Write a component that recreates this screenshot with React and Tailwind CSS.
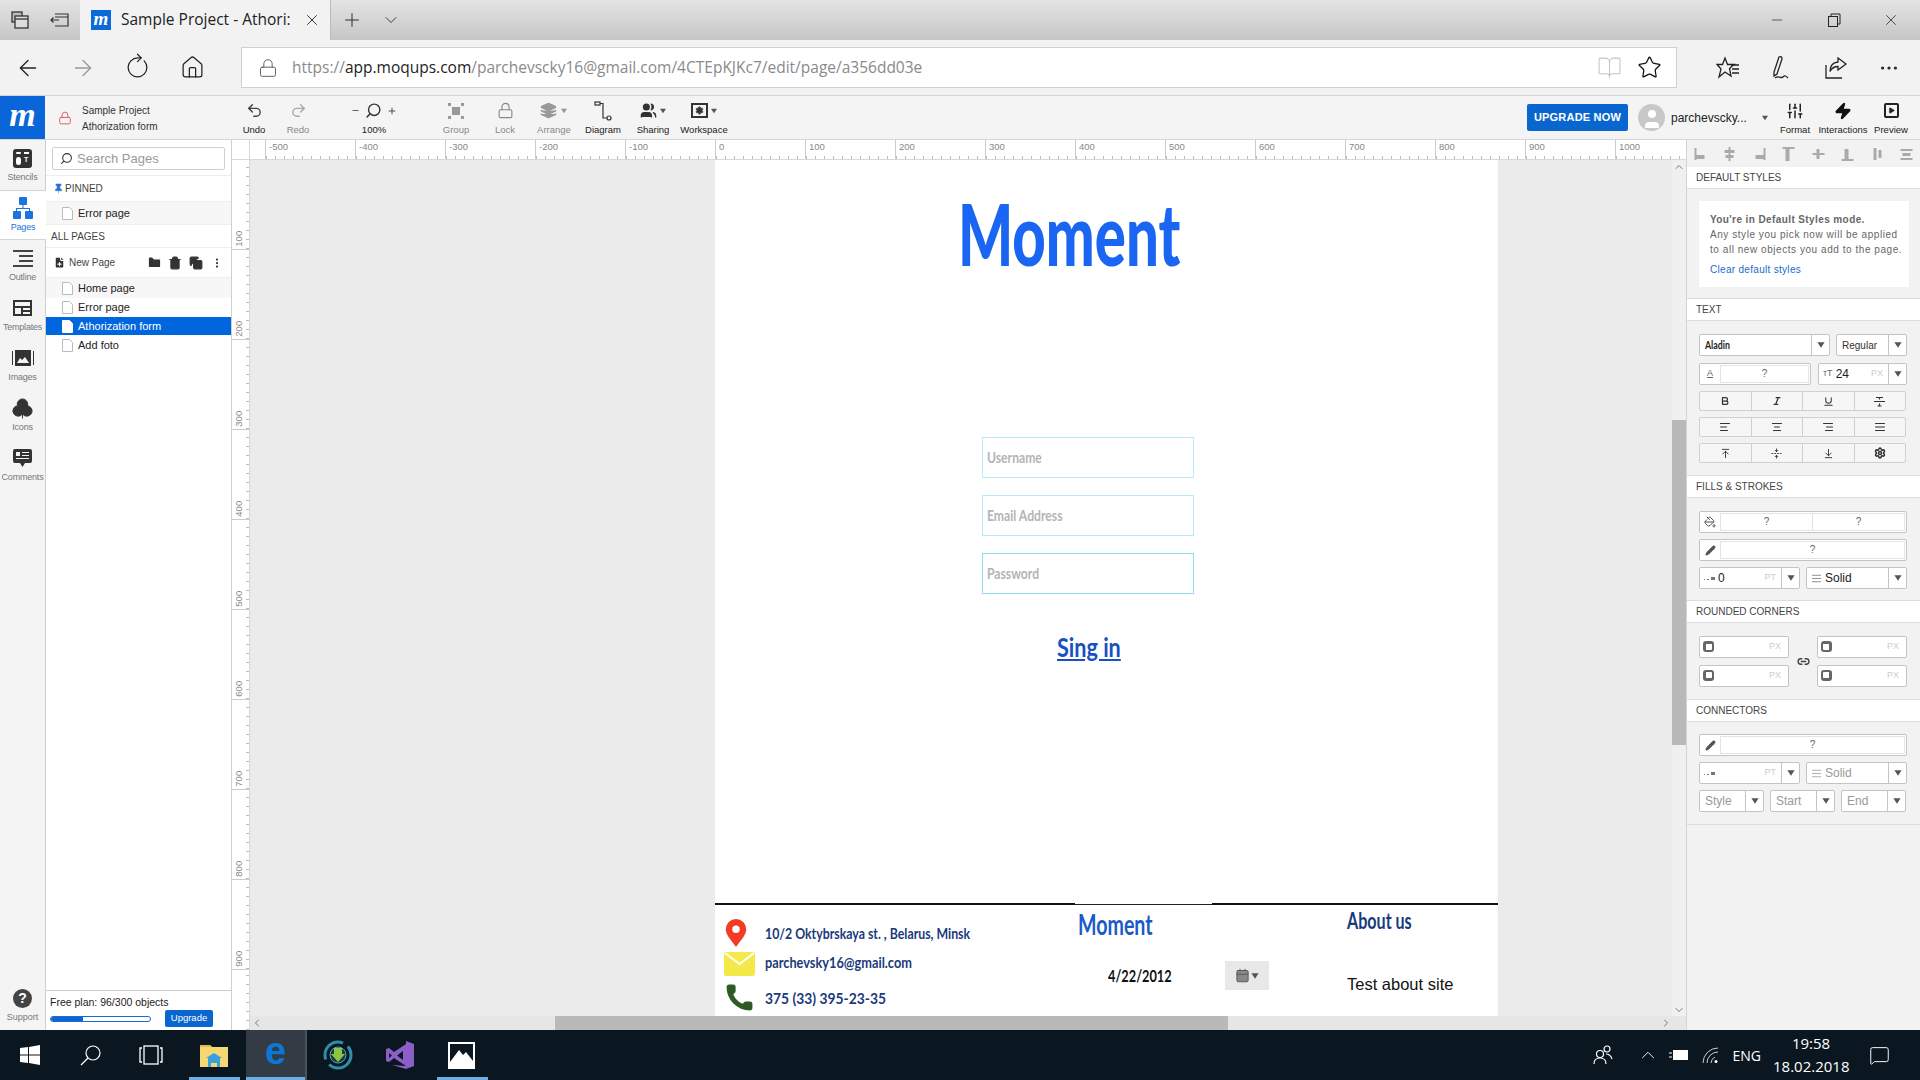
import React from 'react'
import { Lock, Home, ArrowLeft, ArrowRight, RotateCw, Plus, ChevronDown, ChevronUp, ChevronLeft, ChevronRight, X, Minus, Search, Star, Bold, Italic, Underline, AlignLeft, AlignCenter, AlignRight, AlignJustify, ArrowUpToLine, FoldVertical, ArrowDownToLine, Settings, Undo2, Redo2, Zap, Play, MoreHorizontal, MoreVertical, Link2, Pencil, Users, BookOpen, Phone, Calendar, Trash2, Copy, FolderPlus, FilePlus, Pin, Club, MessageSquare, Layers, SlidersVertical, User, PaintBucket } from 'lucide-react'

const sans = "font-['Liberation_Sans',Arial,sans-serif]"

// no Aladin here, squeezed heavy Lato is the closest
const Aladin = ({ className = '', children }) => (
  <span className={`inline-block whitespace-nowrap font-['Lato',sans-serif] origin-left ${className}`}>{children}</span>
)

const Caret = ({ className = '' }) => <span className={`inline-block w-0 h-0 border-x-[4px] border-x-transparent border-t-[6px] border-t-[#555] ${className}`}></span>

const TabBar = () => (
  <div className="h-[40px] flex items-stretch bg-linear-to-b from-[#e4e4e4] to-[#c6c6c6] text-[#222]">
    <div className="w-[40px] flex items-center justify-center">
      <svg width="20" height="20" viewBox="0 0 20 20" fill="none" stroke="#333" strokeWidth="1.3"><rect x="2" y="2" width="10" height="10" fill="#bbb" /><rect x="5" y="6" width="13" height="12" fill="#ddd" /><path d="M5 9h13" /></svg>
    </div>
    <div className="w-[40px] flex items-center justify-center">
      <svg width="20" height="18" viewBox="0 0 20 18" fill="none" stroke="#333" strokeWidth="1.2"><path d="M5 3h13v12H5M5 6h13M1 9h8M3.5 6.5 1 9l2.500 2.500" /></svg>
    </div>
    <div className="w-[251px] bg-[#f2f2f2] flex items-center border-r border-[#bbb]">
      <div className="ml-[11px] w-[20px] h-[20px] bg-[#0b6ad8] flex items-center justify-center text-white font-['Liberation_Serif',serif] italic font-bold text-[19px] leading-none pb-1">m</div>
      <span className="ml-[10px] w-[170px] overflow-hidden whitespace-nowrap text-[15.5px] font-['Open_Sans',sans-serif]">Sample Project - Athori:</span>
      <X size={18} strokeWidth={1.2} className="ml-[12px]" />
    </div>
    <div className="w-[42px] flex items-center justify-center"><Plus size={22} strokeWidth={1} /></div>
    <div className="w-[36px] flex items-center justify-center"><ChevronDown size={20} strokeWidth={1} /></div>
    <div className="flex-1"></div>
    <div className="w-[58px] flex items-center justify-center"><Minus size={16} strokeWidth={1} /></div>
    <div className="w-[56px] flex items-center justify-center">
      <svg width="14" height="14" viewBox="0 0 14 14" fill="none" stroke="#222"><rect x="1.500" y="3.500" width="9" height="10" /><path d="M4 3V1h9v10h-2.500" /></svg>
    </div>
    <div className="w-[58px] flex items-center justify-center"><X size={18} strokeWidth={1} /></div>
  </div>
)

const NavBar = () => (
  <div className="h-[56px] bg-[#f2f2f2] flex items-center border-b border-[#d4d4d4] text-[#222]">
    <div className="w-[55px] flex justify-center"><ArrowLeft size={26} strokeWidth={1.2} /></div>
    <div className="w-[55px] flex justify-center text-[#999]"><ArrowRight size={26} strokeWidth={1.2} /></div>
    <div className="w-[55px] flex justify-center"><RotateCw size={25} strokeWidth={1.2} className="-rotate-45" /></div>
    <div className="w-[55px] flex justify-center"><Home size={25} strokeWidth={1.2} /></div>
    <div className="ml-[21px] w-[1436px] h-[41px] bg-white border border-[#d0d0d0] flex items-center font-['Open_Sans',sans-serif] text-[15.5px] text-[#8a8a8a]">
      <Lock size={20} strokeWidth={1.1} className="ml-[16px] text-[#555]" />
      <span className="ml-[14px]">https://<span className="text-[#222]">app.moqups.com</span>/parchevscky16@gmail.com/4CTEpKJKc7/edit/page/a356dd03e</span>
      <div className="ml-auto mr-[14px] flex items-center gap-[15px]">
        <BookOpen size={25} strokeWidth={1} className="text-[#c4c4c4]" />
        <Star size={25} strokeWidth={1.2} className="text-[#111]" />
      </div>
    </div>
    <div className="flex items-center pl-[39px] gap-[30px]">
      <svg width="24" height="24" viewBox="0 0 24 24" fill="none" stroke="#222" strokeWidth="1.3"><path d="M9 2l2.500 6.500H18l-4.500 4L15 20l-6-4-6 5 2-8-4-4.500h5.500zM15 9h8M16 13h7M16 17h7" /></svg>
      <svg width="24" height="26" viewBox="0 0 24 26" fill="none" stroke="#222" strokeWidth="1.3"><path d="M9 2c2-1 3 0 3 2L7 19l-3 2 0-4zM5 23c4-3 6 1 8-1s3-1 5 1" /></svg>
      <svg width="24" height="24" viewBox="0 0 24 24" fill="none" stroke="#222" strokeWidth="1.3"><path d="M2 9v13h16M14 2l8 6-8 6v-3.500c-4 0-6 1-8 5 0-6 3-9 8-9.500z" /></svg>
      <MoreHorizontal size={22} strokeWidth={1.5} />
    </div>
  </div>
)

const ToolItem = ({ label, dim, w, icon }) => (
  <div className={`flex flex-col items-center shrink-0 ${dim ? 'text-[#888]' : 'text-[#222]'}`} style={{ width: w }}>
    <div className="h-[24px] flex items-center justify-center">{icon}</div>
    <span className="text-[9.5px] leading-[14px] whitespace-nowrap">{label}</span>
  </div>
)

const Toolbar = () => (
  <div className={`h-[44px] flex items-center bg-[#f4f4f4] border-b border-[#d4d4d4] ${sans}`}>
    <div className="w-[45px] h-full bg-[#0a66d8] flex items-center justify-center text-white font-['Liberation_Serif',serif] italic font-bold text-[34px] leading-none pb-[6px]">m</div>
    <Lock size={14} strokeWidth={1.5} className="ml-[13px] text-[#d9534f]" />
    <div className="ml-[10px] w-[156px] pt-[2px] text-[10px] leading-[16px] text-[#333] whitespace-nowrap">
      <div>Sample Project</div>
      <div>Athorization form</div>
    </div>
    <ToolItem w={32} label="Undo" icon={<Undo2 size={17} strokeWidth={2} className="text-[#444]" />} />
    <ToolItem w={56} dim label="Redo" icon={<Redo2 size={17} strokeWidth={2} className="text-[#aaa]" />} />
    <ToolItem w={96} label="100%" icon={<span className="flex items-center gap-[5px] text-[15px] text-[#333]"><Minus size={9} strokeWidth={2} /><Search size={17} strokeWidth={2} className="-scale-x-100" /><Plus size={10} strokeWidth={2} /></span>} />
    <ToolItem w={68} dim label="Group" icon={<svg width="16" height="16" viewBox="0 0 16 16" fill="#999"><rect x="4" y="4" width="8" height="8" /><path d="M0 0h3v3H0zM13 0h3v3h-3zM0 13h3v3H0zM13 13h3v3h-3z" /></svg>} />
    <ToolItem w={30} dim label="Lock" icon={<Lock size={17} strokeWidth={1.6} className="text-[#888]" />} />
    <ToolItem w={68} dim label="Arrange" icon={<span className="flex items-center gap-[3px]"><Layers size={17} fill="#999" className="text-[#999]" /><Caret className="scale-75 opacity-60" /></span>} />
    <ToolItem w={30} label="Diagram" icon={<svg width="18" height="20" viewBox="0 0 18 20" fill="none" stroke="#333" strokeWidth="1.2"><rect x="1" y="1" width="5" height="3" /><circle cx="15" cy="17" r="2" /><path d="M6 2.500h3v14.500h4" /></svg>} />
    <ToolItem w={70} label="Sharing" icon={<span className="flex items-center gap-[2px]"><Users size={17} fill="#333" className="text-[#333]" /><Caret className="scale-75" /></span>} />
    <ToolItem w={32} label="Workspace" icon={<span className="flex items-center gap-[2px]"><span className="relative w-[17px] h-[15px] border-2 border-[#333] flex items-center justify-center"><Settings size={9} fill="#333" className="text-[#333]" /></span><Caret className="scale-75" /></span>} />
    <div className="ml-auto pr-[5px] flex items-center">
      <div className="w-[101px] h-[27px] bg-[#0a66cf] rounded-[2px] text-white text-[11px] font-bold tracking-[.2px] flex items-center justify-center">UPGRADE NOW</div>
      <div className="ml-[10px] w-[27px] h-[27px] rounded-full bg-[#c8c8c8] flex items-end justify-center overflow-hidden"><User size={24} fill="#fff" strokeWidth={0} /></div>
      <span className="ml-[6px] w-[80px] text-[12px] text-[#222] whitespace-nowrap">parchevscky...</span>
      <Caret className="ml-[10px] scale-75" />
      <div className="ml-[2px] flex">
        <ToolItem w={48} label="Format" icon={<SlidersVertical size={18} strokeWidth={2} className="text-[#222]" />} />
        <ToolItem w={48} label="Interactions" icon={<Zap size={18} fill="#111" className="text-[#111]" />} />
        <ToolItem w={48} label="Preview" icon={<span className="w-[15px] h-[15px] border-2 border-[#222] rounded-[2px] flex items-center justify-center"><Play size={7} fill="#222" className="text-[#222]" /></span>} />
      </div>
    </div>
  </div>
)

const railItems = [
  { label: 'Stencils', icon: <span className="w-[19px] h-[19px] rounded-[3px] bg-[#333] grid grid-cols-2 p-[3px] gap-[3px]"><i className="bg-white rounded-full"></i><i className="bg-white"></i><i className="bg-white rounded-full"></i><b className="text-white text-[7px] leading-[6px] not-italic">T</b></span> },
  { label: 'Pages', active: true, icon: <svg width="20" height="22" viewBox="0 0 20 22" fill="#1a73e0"><rect x="6" y="0" width="8" height="8" rx="1" /><path d="M9.500 8h1v3H17v3h-1v-2H4v2H3v-3h6.500z" /><rect x="0" y="14" width="8" height="8" rx="1" /><rect x="12" y="14" width="8" height="8" rx="1" /></svg> },
  { label: 'Outline', icon: <svg width="20" height="17" viewBox="0 0 20 17" fill="#444"><path d="M0 0h20v2H0zM6 5h14v2H6zM6 10h14v2H6zM0 15h20v2H0z" /></svg> },
  { label: 'Templates', icon: <svg width="19" height="16" viewBox="0 0 19 16" fill="#333"><path d="M0 0h19v16H0zM2 2v4h15V2zM2 8v6h6V8zm8 0v2h7V8zm0 4v2h7v-2z" fillRule="evenodd" /></svg> },
  { label: 'Images', icon: <svg width="22" height="16" viewBox="0 0 22 16" fill="#333"><path d="M0 1h1v14H0zM21 1h1v14h-1zM3 0h16v16H3zm2 13h12l-4-6-3 3-2-2z" fillRule="evenodd" /></svg> },
  { label: 'Icons', icon: <Club size={23} fill="#333" strokeWidth={1} className="text-[#333]" /> },
  { label: 'Comments', icon: <svg width="19" height="18" viewBox="0 0 19 18" fill="#333"><path d="M2 0h15a2 2 0 0 1 2 2v10a2 2 0 0 1-2 2h-5l-2.500 4L7 14H2a2 2 0 0 1-2-2V2a2 2 0 0 1 2-2zm1 3v4h4V3zm6 0v1h7V3zm0 3v1h7V6zM3 9v1h13V9z" fillRule="evenodd" /></svg> },
]

const LeftRail = () => (
  <div className={`w-[46px] shrink-0 bg-[#f4f4f4] border-r border-[#cfcfcf] flex flex-col ${sans}`}>
    {railItems.map((it, i) => (
      <div key={i} className={`h-[50px] flex flex-col items-center justify-center gap-[2px] pb-[2px] ${it.active ? 'bg-white border-y border-[#d4d4d4] -mr-px text-[#1a73e0]' : 'text-[#777]'}`}>
        <div className="h-[24px] flex items-center justify-center">{it.icon}</div>
        <span className="text-[9px] leading-[10px] tracking-[-.2px]">{it.label}</span>
      </div>
    ))}
    <div className="mt-auto h-[41px] flex flex-col items-center text-[#777]">
      <span className="w-[19px] h-[19px] rounded-full bg-[#444] text-white text-[14px] font-bold leading-[19px] text-center">?</span>
      <span className="text-[9px] mt-[4px] leading-[10px]">Support</span>
    </div>
  </div>
)

const Doc = ({ active }) => (
  <svg width="11" height="13" viewBox="0 0 11 13" fill="#fff" stroke={active ? '#fff' : '#bbb'} className="ml-[16px] mr-[5px] shrink-0"><path d="M.5.5h7l3 3v9H.5z" /></svg>
)

const PageRow = ({ label, bg, active }) => (
  <div className={`flex items-center text-[11px] ${bg} ${active ? 'bg-[#0066dd] text-white' : 'text-[#222]'}`}>
    <Doc active={active} />
    <span>{label}</span>
  </div>
)

const SidePanel = () => (
  <div className={`w-[186px] shrink-0 bg-white border-r border-[#cfcfcf] flex flex-col ${sans}`}>
    <div className="h-[36px] shrink-0 pt-[7px] px-[6px] border-b border-[#eee]">
      <div className="h-[23px] border border-[#d0d0d0] rounded-[2px] flex items-center text-[#999] text-[13px]">
        <Search size={13} strokeWidth={2} className="ml-[7px] mr-[4px] text-[#333] -scale-x-100" />Search Pages
      </div>
    </div>
    <div className="h-[26px] shrink-0 flex items-center pl-[7px] text-[10px] text-[#444] border-b border-[#eee]">
      <Pin size={11} fill="#2a6fd6" strokeWidth={1} className="text-[#2a6fd6] mr-[1px]" />PINNED
    </div>
    <PageRow label="Error page" bg="h-[22px] shrink-0 bg-[#f7f7f7]" />
    <div className="h-[24px] shrink-0 flex items-center pl-[5px] text-[10px] text-[#444] border-y border-[#eee]">ALL PAGES</div>
    <div className="h-[30px] shrink-0 flex items-center pl-[7px] pr-[8px] text-[10px] text-[#444] border-b border-[#eee]">
      <FilePlus size={13} fill="#333" className="text-white mr-[3px]" />New Page
      <FolderPlus size={15} fill="#333" className="text-white ml-auto" />
      <Trash2 size={14} fill="#333" className="text-[#333] ml-[6px]" />
      <Copy size={14} fill="#333" className="text-[#333] ml-[7px]" />
      <MoreVertical size={12} strokeWidth={2.5} className="text-[#333] ml-[8px]" />
    </div>
    <PageRow label="Home page" bg="h-[20px] shrink-0 bg-[#f7f7f7]" />
    <PageRow label="Error page" bg="h-[19px] shrink-0" />
    <PageRow label="Athorization form" bg="h-[18px] shrink-0" active />
    <PageRow label="Add foto" bg="h-[20px] shrink-0" />
    <div className="mt-auto h-[40px] border-t border-[#ccc] px-[4px] pt-[5px]">
      <div className="text-[10.5px] leading-[13px] text-[#222] whitespace-nowrap">Free plan: 96/300 objects</div>
      <div className="flex items-center mt-[1px]">
        <div className="w-[101px] h-[6px] border border-[#1a6ad0] rounded-full overflow-hidden"><div className="h-full bg-[#0a66d8]" style={{ width: '32%' }}></div></div>
        <div className="ml-[14px] w-[48px] h-[17px] bg-[#0a66cf] rounded-[2px] text-white text-[9.5px] flex items-center justify-center">Upgrade</div>
      </div>
    </div>
  </div>
)

const hLabels = [-500, -400, -300, -200, -100, 0, 100, 200, 300, 400, 500, 600, 700, 800, 900, 1000]
const vLabels = [100, 200, 300, 400, 500, 600, 700, 800, 900]

const HRuler = () => (
  <div className={`h-[20px] shrink-0 flex overflow-hidden bg-white border-b border-[#d8d8d8] ${sans}`}>
    <div className="w-[18px] shrink-0 border-r border-[#d8d8d8]"></div>
    <div className="w-[15px] shrink-0"></div>
    {hLabels.map(n => (
      <div key={n} className="w-[90px] shrink-0 border-l border-[#ccc] pl-[3px] text-[9.5px] leading-[13px] text-[#888] bg-[repeating-linear-gradient(90deg,#bbb_0,#bbb_1px,transparent_1px,transparent_9px)] bg-[length:100%_3px] bg-bottom bg-no-repeat">{n}</div>
    ))}
  </div>
)

const VRuler = () => (
  <div className={`w-[18px] shrink-0 flex flex-col bg-white border-r border-[#d8d8d8] overflow-hidden ${sans}`}>
    {vLabels.map(n => (
      <div key={n} className="h-[90px] shrink-0 border-b border-[#ccc] relative bg-[repeating-linear-gradient(0deg,#bbb_0,#bbb_1px,transparent_1px,transparent_9px)] bg-[length:3px_100%] bg-right bg-no-repeat">
        <span className="absolute left-[-1px] bottom-[6px] -rotate-90 text-[9.5px] text-[#888] leading-none">{n}</span>
      </div>
    ))}
    <div className="flex-1 bg-[repeating-linear-gradient(0deg,#bbb_0,#bbb_1px,transparent_1px,transparent_9px)] bg-[length:3px_100%] bg-right bg-no-repeat"></div>
  </div>
)

const FormInput = ({ label, strong, className = '' }) => (
  <div className={`w-[212px] h-[41px] border ${strong ? 'border-[#8fdcf0]' : 'border-[#b8ecf8]'} flex items-center pl-[4px] pb-[1px] ${className}`}>
    <Aladin className="text-[16px] font-bold text-[#b4b4b4] scale-x-[.76]">{label}</Aladin>
  </div>
)

const Artboard = () => (
  <div className="ml-[465px] w-[783px] h-[856px] bg-white flex flex-col shrink-0 overflow-hidden">
    <div className="ml-[243px] mt-[33px] h-[80px]">
      <Aladin className="text-[#1a66f2] text-[86px] leading-[80px] font-black scale-x-[.675]">Moment</Aladin>
    </div>
    <div className="ml-[267px] mt-[164px] flex flex-col gap-[17px]">
      <FormInput label="Username" />
      <FormInput label="Email Address" />
      <FormInput label="Password" strong />
    </div>
    <div className="ml-[342px] mt-[35px] h-[36px]">
      <Aladin className="text-[#1a50c0] text-[27px] font-bold leading-[36px] underline scale-x-[.8]">Sing in</Aladin>
    </div>
    <div className="mt-[238px] flex items-center">
      <div className="w-[360px] h-[2px] bg-[#111]"></div>
      <div className="w-[137px] h-px bg-[#222]"></div>
      <div className="flex-1 h-[2px] bg-[#111]"></div>
    </div>
    <div className="flex flex-1">
      <div className="w-[360px] pl-[9px] flex flex-col">
        <div className="flex items-center h-[41px] pt-[14px]">
          <svg width="24" height="28" viewBox="0 0 24 30" fill="#f53b24"><path d="M12 0a11 11 0 0 1 11 11c0 7-8 14-11 19C9 25 1 18 1 11A11 11 0 0 1 12 0z" /><circle cx="12" cy="11" r="4" fill="#fff" /></svg>
          <Aladin className="ml-[17px] text-[16px] font-bold text-[#1a3a7c] scale-x-[.77]">10/2 Oktybrskaya st. , Belarus, Minsk</Aladin>
        </div>
        <div className="flex items-center mt-[6px] h-[24px]">
          <div className="w-[31px] h-[24px] bg-[#f3ea4a] rounded-[2px] flex justify-center overflow-hidden">
            <svg width="31" height="14" viewBox="0 0 31 14" fill="none" stroke="#fff" strokeWidth="2"><path d="M1 1l14.500 11L30 1" /></svg>
          </div>
          <Aladin className="ml-[10px] text-[15px] font-bold text-[#1a3a7c] scale-x-[.85] -mt-[4px]">parchevsky16@gmail.com</Aladin>
        </div>
        <div className="flex items-center mt-[6px]">
          <Phone size={31} fill="#2f5a24" strokeWidth={0} />
          <Aladin className="ml-[10px] text-[16px] font-bold text-[#1a3a7c] scale-x-[.865]">375 (33) 395-23-35</Aladin>
        </div>
      </div>
      <div className="w-[272px] flex flex-col pl-[3px]">
        <Aladin className="text-[#1a5ac8] text-[28px] font-bold leading-[38px] scale-x-[.7]">Moment</Aladin>
        <div className="flex mt-[18px] items-center">
          <Aladin className="ml-[30px] w-[117px] text-[17px] font-bold text-[#111] scale-x-[.75]">4/22/2012</Aladin>
          <div className="w-[44px] h-[29px] bg-[#e8e8e8] flex items-center justify-center gap-[1px]">
            <Calendar size={15} fill="#888" strokeWidth={1.5} className="text-[#555]" /><Caret className="scale-90" />
          </div>
        </div>
      </div>
      <div className="flex-1 flex flex-col">
        <Aladin className="text-[#1a3a7c] text-[23px] font-bold leading-[30px] scale-x-[.7]">About us</Aladin>
        <span className={`text-[16.5px] text-[#111] mt-[37px] ${sans}`}>Test about site</span>
      </div>
    </div>
  </div>
)

const Canvas = () => (
  <div className="flex-1 flex flex-col min-w-0">
    <HRuler />
    <div className="flex-1 flex min-h-0">
      <VRuler />
      <div className="flex-1 flex flex-col min-w-0">
        <div className="flex-1 flex min-h-0">
          <div className="flex-1 bg-[#ebebeb] overflow-hidden flex items-start min-w-0"><Artboard /></div>
          <div className="w-[14px] bg-[#f0f0f0] flex flex-col items-center">
            <ChevronUp size={12} className="text-[#777] mt-[1px]" />
            <div className="w-full h-[325px] mt-[247px] bg-[#b9b9b9]"></div>
            <ChevronDown size={12} className="text-[#777] mt-auto" />
          </div>
        </div>
        <div className="h-[14px] bg-[#e6e6e6] flex items-center">
          <ChevronLeft size={12} className="text-[#777] ml-[1px]" />
          <div className="w-[673px] h-full ml-[292px] bg-[#b9b9b9]"></div>
          <ChevronRight size={12} className="text-[#777] ml-auto mr-[14px]" />
        </div>
      </div>
    </div>
  </div>
)

const PanelHeader = ({ children }) => (
  <div className="h-[22px] shrink-0 bg-white border-b border-[#ddd] flex items-center pl-[9px] text-[10px] text-[#444]">{children}</div>
)

const Box = ({ className = '', children }) => (
  <div className={`h-[22px] border border-[#c4c4c4] rounded-[2px] bg-white flex items-center shrink-0 ${className}`}>{children}</div>
)

const Arrow = () => <div className="w-[18px] h-full border-l border-[#c4c4c4] flex items-center justify-center shrink-0"><Caret className="scale-90" /></div>

const BtnRow = ({ icons }) => (
  <div className="h-[20px] w-[207px] border border-[#d0d0d0] rounded-[2px] bg-[#f6f6f6] flex divide-x divide-[#d0d0d0]">
    {icons.map((ic, i) => <div key={i} className="flex-1 flex items-center justify-center text-[#333]">{ic}</div>)}
  </div>
)

const Field = ({ icon, children }) => (
  <Box className="w-[208px] pr-[1px]">
    <div className="w-[20px] flex justify-center text-[#555]">{icon}</div>
    <div className="flex-1 h-[18px] border border-[#e4e4e4] flex divide-x divide-[#e0e0e0] text-[10px] text-[#666] text-center leading-[16px]">{children}</div>
  </Box>
)

const Corner = ({ className = '' }) => <span className={`ml-[3px] w-[11px] h-[11px] border-2 border-[#666] rounded-[3px] ${className}`}></span>

const Px = () => <span className="ml-auto mr-[7px] text-[9px] text-[#ccc]">PX</span>

const Dots = () => <svg width="11" height="5" viewBox="0 0 11 5" fill="#777" className="ml-[4px] shrink-0"><path d="M0 3h1v1H0zM3 3h2v1H3zM7 1h4v3H7z" /></svg>

const alignIcons = ['M0 1h2v12H0zM2 8h8v4H2z', 'M5 0h2v3h4v3H7v2h3v3H7v3H5v-3H2V8h3V6H1V3h4z', 'M10 1h2v12h-2zM2 8h8v4H2z', 'M0 0h12v2H0zM3 2h4v12H3z', 'M0 6h12v2H0zM4 2h3v10H4z', 'M0 12h12v2H0zM3 2h4v10H3z', 'M2 1h3v12H2zM7 3h3v8H7z', 'M0 2h12v2H0zM2 6h8v3H2zM0 11h12v2H0z']

const StrikeT = () => <svg width="11" height="11" viewBox="0 0 11 11" fill="none" stroke="#333" strokeWidth="1.2"><path d="M2 1.500h7M5.500 1.500v2M0 5.500h11M5.500 7.500V10M3.500 10h4" /></svg>

const RightPanel = () => (
  <div className={`w-[234px] shrink-0 bg-[#f2f2f2] border-l border-[#d4d4d4] flex flex-col ${sans}`}>
    <div className="h-[27px] shrink-0 flex items-center justify-between px-[7px]">
      {alignIcons.map((d, i) => <svg key={i} width="13" height="14" viewBox="0 0 12 14" fill="#aaa"><path d={d} /></svg>)}
    </div>
    <PanelHeader>DEFAULT STYLES</PanelHeader>
    <div className="h-[110px] shrink-0 border-b border-[#ddd] pt-[12px] px-[12px]">
      <div className="h-[86px] w-[210px] bg-white pl-[11px] pt-[11px] text-[10px] leading-[15px] text-[#666] tracking-[.55px]">
        <div className="font-bold tracking-[.4px]">You're in Default Styles mode.</div>
        <div>Any style you pick now will be applied</div>
        <div>to all new objects you add to the page.</div>
        <div className="text-[#1a6ad0] mt-[5px] tracking-[.3px]">Clear default styles</div>
      </div>
    </div>
    <PanelHeader>TEXT</PanelHeader>
    <div className="h-[155px] shrink-0 border-b border-[#ddd] pt-[13px] px-[12px] flex flex-col">
      <div className="flex gap-[6px]">
        <Box className="w-[131px]"><Aladin className="ml-[5px] text-[11px] font-bold scale-x-[.8] text-[#222]">Aladin</Aladin><div className="ml-auto h-full"><Arrow /></div></Box>
        <Box className="w-[71px]"><span className="ml-[5px] text-[10px] text-[#333]">Regular</span><div className="ml-auto h-full"><Arrow /></div></Box>
      </div>
      <div className="flex gap-[7px] mt-[7px]">
        <Box className="w-[112px] pr-[1px]"><span className="w-[20px] text-center text-[9px] underline text-[#666]">A</span><div className="flex-1 h-[18px] border border-[#e4e4e4] text-[10px] text-[#666] text-center leading-[16px]">?</div></Box>
        <Box className="w-[89px]"><span className="ml-[4px] text-[9px] text-[#666]">тT</span><span className="ml-[3px] text-[12px] text-[#222]">24</span><span className="ml-auto mr-[5px] text-[9px] text-[#ccc]">PX</span><Arrow /></Box>
      </div>
      <div className="flex flex-col gap-[6px] mt-[6px]">
        <BtnRow icons={[<Bold size={10} strokeWidth={3} />, <Italic size={10} strokeWidth={3} />, <Underline size={11} strokeWidth={2.2} />, <StrikeT />]} />
        <BtnRow icons={[<AlignLeft size={12} />, <AlignCenter size={12} />, <AlignRight size={12} />, <AlignJustify size={12} />]} />
        <BtnRow icons={[<ArrowUpToLine size={11} />, <FoldVertical size={11} />, <ArrowDownToLine size={11} />, <Settings size={12} strokeWidth={3} />]} />
      </div>
    </div>
    <PanelHeader>FILLS &amp; STROKES</PanelHeader>
    <div className="h-[103px] shrink-0 border-b border-[#ddd] pt-[13px] px-[12px] flex flex-col gap-[6px]">
      <Field icon={<PaintBucket size={12} />}><div className="flex-1">?</div><div className="flex-1">?</div></Field>
      <Field icon={<Pencil size={11} fill="#555" />}><div className="flex-1">?</div></Field>
      <div className="flex gap-[6px]">
        <Box className="w-[101px]"><Dots /><span className="ml-[3px] text-[12px] text-[#222]">0</span><span className="ml-auto mr-[5px] text-[9px] text-[#ccc]">PT</span><Arrow /></Box>
        <Box className="w-[101px]"><AlignJustify size={11} className="ml-[4px] text-[#888]" /><span className="ml-[3px] text-[12px] text-[#222]">Solid</span><div className="ml-auto h-full"><Arrow /></div></Box>
      </div>
    </div>
    <PanelHeader>ROUNDED CORNERS</PanelHeader>
    <div className="h-[77px] shrink-0 border-b border-[#ddd] pt-[13px] px-[12px] flex items-center">
      <div className="w-[90px] flex flex-col gap-[7px] -mt-[13px]">
        <Box className="w-[90px]"><Corner className="border-t-[3px] border-l-[3px]" /><Px /></Box>
        <Box className="w-[90px]"><Corner className="border-b-[3px] border-l-[3px]" /><Px /></Box>
      </div>
      <Link2 size={13} strokeWidth={2.5} className="mx-[7.5px] -mt-[13px] text-[#444]" />
      <div className="w-[90px] flex flex-col gap-[7px] -mt-[13px]">
        <Box className="w-[90px]"><Corner className="border-t-[3px] border-r-[3px]" /><Px /></Box>
        <Box className="w-[90px]"><Corner className="border-b-[3px] border-r-[3px]" /><Px /></Box>
      </div>
    </div>
    <PanelHeader>CONNECTORS</PanelHeader>
    <div className="h-[103px] shrink-0 border-b border-[#ddd] pt-[12px] px-[12px] flex flex-col gap-[6px]">
      <Field icon={<Pencil size={11} fill="#555" />}><div className="flex-1">?</div></Field>
      <div className="flex gap-[6px]">
        <Box className="w-[101px]"><Dots /><span className="ml-auto mr-[5px] text-[9px] text-[#ccc]">PT</span><Arrow /></Box>
        <Box className="w-[101px]"><AlignJustify size={11} className="ml-[4px] text-[#aaa]" /><span className="ml-[3px] text-[12px] text-[#999]">Solid</span><div className="ml-auto h-full"><Arrow /></div></Box>
      </div>
      <div className="flex gap-[6px]">
        {['Style', 'Start', 'End'].map(t => (
          <Box key={t} className="w-[65px]"><span className="ml-[5px] text-[12px] text-[#999]">{t}</span><div className="ml-auto h-full"><Arrow /></div></Box>
        ))}
      </div>
    </div>
  </div>
)

const tasks = [
  { w: 60, icon: <svg width="20" height="20" viewBox="0 0 20 20" fill="#fff"><path d="M0 3l8-1v7.500H0zM9 2l11-2v9.500H9zM0 10.500h8V18l-8-1zM9 10.500h11V20L9 18z" /></svg> },
  { w: 60, icon: <svg width="21" height="21" viewBox="0 0 21 21" fill="none" stroke="#fff" strokeWidth="1.2"><circle cx="13" cy="8" r="7" /><path d="M8 13l-7 7" /></svg> },
  { w: 62, icon: <svg width="24" height="20" viewBox="0 0 24 20" fill="none" stroke="#fff" strokeWidth="1.3"><rect x="5" y="1" width="14" height="18" /><path d="M3 3H1v14h2M21 3h2v14h-2" /></svg> },
  { w: 64, bar: 'left-[7px] right-[6px]', icon: <svg width="28" height="24" viewBox="0 0 28 24"><path d="M0 2h10l2 2h16v20H0z" fill="#f6d776" /><path d="M0 2h10l2 2H0z" fill="#e8b93f" /><path d="M8 14h12v10h-3v-4h-6v4H8z" fill="#3aa0dc" /><path d="M6 15l8-5 8 5z" fill="#3aa0dc" /></svg> },
  { w: 61, active: true, bar: 'left-0 right-0', icon: <span className="text-[#0a78d7] text-[38px] leading-[38px] font-bold font-['Liberation_Sans',sans-serif] -mt-[8px]">e</span> },
  { w: 61, icon: <svg width="30" height="30" viewBox="0 0 30 30" fill="none"><circle cx="15" cy="15" r="13" stroke="#2f8fa8" strokeWidth="3" strokeDasharray="30 6" /><circle cx="15" cy="15" r="8" fill="#1e3a44" stroke="#3bb0c8" /><path d="M11 8h8v6h3l-7 8-7-8h3z" fill="#8cc63f" /></svg> },
  { w: 63, icon: <svg width="30" height="30" viewBox="0 0 30 30" fill="#8b5fc7"><path d="M21 1l8 3v22l-8 3-14-4 14 1zM1 9l3-1 5 4 12-8v22L9 18l-5 4-3-1zm3 4v5l3-2.500zm8 2.500L18 20V11z" fillRule="evenodd" /></svg> },
  { w: 61, bar: 'left-[6px] right-[4px]', icon: <svg width="27" height="27" viewBox="0 0 27 27"><rect x="0" y="0" width="27" height="27" fill="#fff" /><rect x="2" y="2" width="23" height="23" fill="#0b1720" /><path d="M2 20l9-12 4 5 3-3 7 9v6H2z" fill="#fff" /></svg> },
]

const Taskbar = () => (
  <div className="h-[50px] shrink-0 bg-[#0b1720] flex items-stretch text-white font-['Open_Sans',sans-serif]">
    {tasks.map((t, i) => (
      <div key={i} style={{ width: t.w }} className={`flex flex-col items-center justify-center relative ${t.active ? 'bg-[#333c44] border-r-2 border-r-[#4a525a]' : ''}`}>
        {t.icon}
        {t.bar && <span className={`absolute bottom-0 h-[3px] bg-[#69aee6] ${t.bar}`}></span>}
      </div>
    ))}
    <div className="ml-auto flex items-center pr-[30px]">
      <svg width="20" height="20" viewBox="0 0 20 20" fill="none" stroke="#fff" strokeWidth="1.2"><circle cx="7" cy="9" r="3.500" /><path d="M1 19c0-4 2-6 6-6s6 2 6 6" /><circle cx="14" cy="4" r="3" /><path d="M13 9c3 0 5 2 6 5" /></svg>
      <ChevronUp size={22} strokeWidth={1} className="ml-[24px]" />
      <svg width="20" height="12" viewBox="0 0 20 12" fill="none" stroke="#fff" className="ml-[10px]"><rect x="4.500" y="1.500" width="14" height="9" fill="#fff" /><path d="M0 4h3M0 8h3" /></svg>
      <svg width="17" height="17" viewBox="0 0 17 17" fill="none" stroke="#ccc" className="ml-[13px]"><path d="M1 16A15 15 0 0 1 16 1M5 16A11 11 0 0 1 16 5M9 16a7 7 0 0 1 4-6" /><circle cx="14" cy="14.500" r="1.500" fill="#fff" stroke="none" /></svg>
      <span className="ml-[14px] text-[14px]">ENG</span>
      <div className="ml-[12px] w-[76px] text-center text-[15px] leading-[23px]">
        <div>19:58</div>
        <div>18.02.2018</div>
      </div>
      <MessageSquare size={21} strokeWidth={1.1} className="ml-[20px]" />
    </div>
  </div>
)

export default function App() {
  return (
    <div className="w-[1920px] h-[1080px] flex flex-col overflow-hidden bg-white">
      <TabBar />
      <NavBar />
      <Toolbar />
      <div className="flex-1 flex min-h-0">
        <LeftRail />
        <SidePanel />
        <Canvas />
        <RightPanel />
      </div>
      <Taskbar />
    </div>
  )
}
